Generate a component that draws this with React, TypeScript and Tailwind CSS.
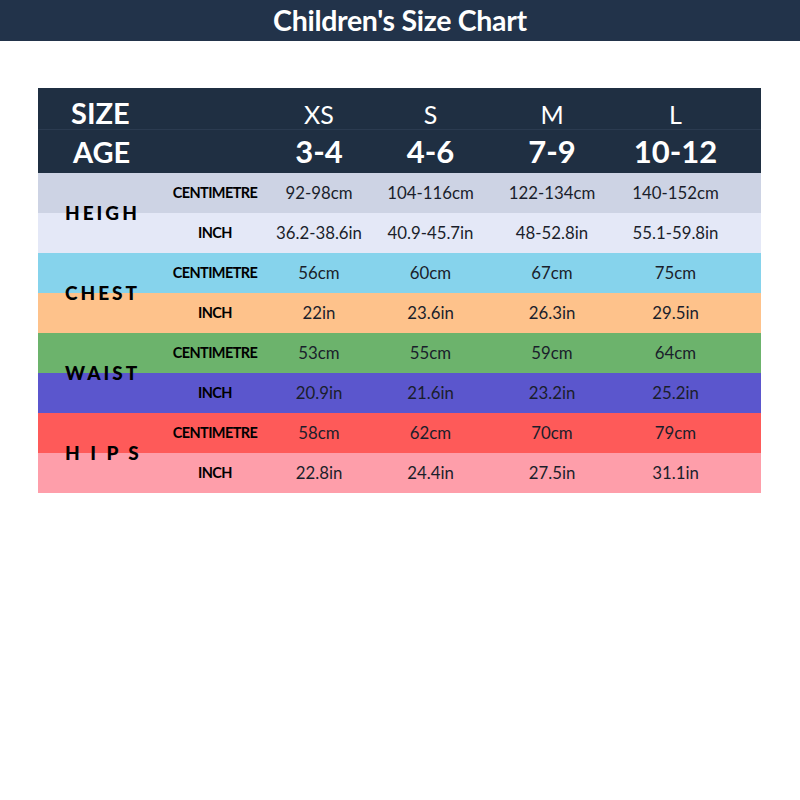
import React from 'react';

type Group = {
  label: string;
  cmBg: string;
  inBg: string;
  split: string;
  cm: string[];
  inch: string[];
};

const groups: Group[] = [
  {
    label: 'HEIGH',
    cmBg: 'bg-[#cdd3e4]',
    inBg: 'bg-[#e4e8f7]',
    split: 'bg-[linear-gradient(to_bottom,#cdd3e4_50%,#e4e8f7_50%)]',
    cm: ['92-98cm', '104-116cm', '122-134cm', '140-152cm'],
    inch: ['36.2-38.6in', '40.9-45.7in', '48-52.8in', '55.1-59.8in'],
  },
  {
    label: 'CHEST',
    cmBg: 'bg-[#86d3ec]',
    inBg: 'bg-[#fec28b]',
    split: 'bg-[linear-gradient(to_bottom,#86d3ec_50%,#fec28b_50%)]',
    cm: ['56cm', '60cm', '67cm', '75cm'],
    inch: ['22in', '23.6in', '26.3in', '29.5in'],
  },
  {
    label: 'WAIST',
    cmBg: 'bg-[#6cb36c]',
    inBg: 'bg-[#5b56cd]',
    split: 'bg-[linear-gradient(to_bottom,#6cb36c_50%,#5b56cd_50%)]',
    cm: ['53cm', '55cm', '59cm', '64cm'],
    inch: ['20.9in', '21.6in', '23.2in', '25.2in'],
  },
  {
    label: 'H I P S',
    cmBg: 'bg-[#fe5a59]',
    inBg: 'bg-[#fe9eaa]',
    split: 'bg-[linear-gradient(to_bottom,#fe5a59_50%,#fe9eaa_50%)]',
    cm: ['58cm', '62cm', '70cm', '79cm'],
    inch: ['22.8in', '24.4in', '27.5in', '31.1in'],
  },
];

const sizes = ['XS', 'S', 'M', 'L'];
const ages = ['3-4', '4-6', '7-9', '10-12'];
const colW = ['w-[108px]', 'w-[115px]', 'w-[128px]', 'flex-1 pr-[26px]'];

function ValueRow({ sub, values, bg }: { sub: string; values: string[]; bg: string }) {
  return (
    <div className={`flex h-10 items-center ${bg}`}>
      <div className="w-[100px] text-center text-[14.5px] font-bold tracking-[-0.6px] text-black">{sub}</div>
      {values.map((v, i) => (
        <div key={i} className={`${colW[i]} text-center text-[16.8px] text-[#1a1e2b]`}>
          {v}
        </div>
      ))}
    </div>
  );
}

export default function App() {
  return (
    <div className="h-[800px] w-[800px] bg-white font-['Lato',sans-serif]">
      <div className="flex h-[41px] items-center justify-center bg-[#22334a]">
        <h1 className="text-[28.5px] font-bold tracking-[-0.3px] text-white">Children's Size Chart</h1>
      </div>

      <div className="mx-[38px] mt-[47px] w-[723px]">
        {/* Header */}
        <div className="bg-[#1f2f42] text-white">
          <div className="flex h-[42px] items-end border-b border-[#2b3b50] pb-0.5">
            <div className="w-[227px] pl-[33px] text-[29px] font-bold leading-none">SIZE</div>
            {sizes.map((s, i) => (
              <div key={s} className={`${colW[i]} text-center text-[25px] leading-none`}>
                {s}
              </div>
            ))}
          </div>
          <div className="flex h-[43px] items-center">
            <div className="w-[227px] pl-[35px] text-[29px] font-bold">AGE</div>
            {ages.map((a, i) => (
              <div key={a} className={`${colW[i]} text-center text-[31px] font-bold`}>
                {a}
              </div>
            ))}
          </div>
        </div>

        {groups.map((g) => (
          <div key={g.label} className="flex">
            <div className={`flex w-[127px] items-center pl-[27px] ${g.split}`}>
              <span className="whitespace-pre text-[19px] font-black tracking-[3px] text-black">{g.label}</span>
            </div>
            <div className="flex-1">
              <ValueRow sub="CENTIMETRE" values={g.cm} bg={g.cmBg} />
              <ValueRow sub="INCH" values={g.inch} bg={g.inBg} />
            </div>
          </div>
        ))}
      </div>
    </div>
  );
}
